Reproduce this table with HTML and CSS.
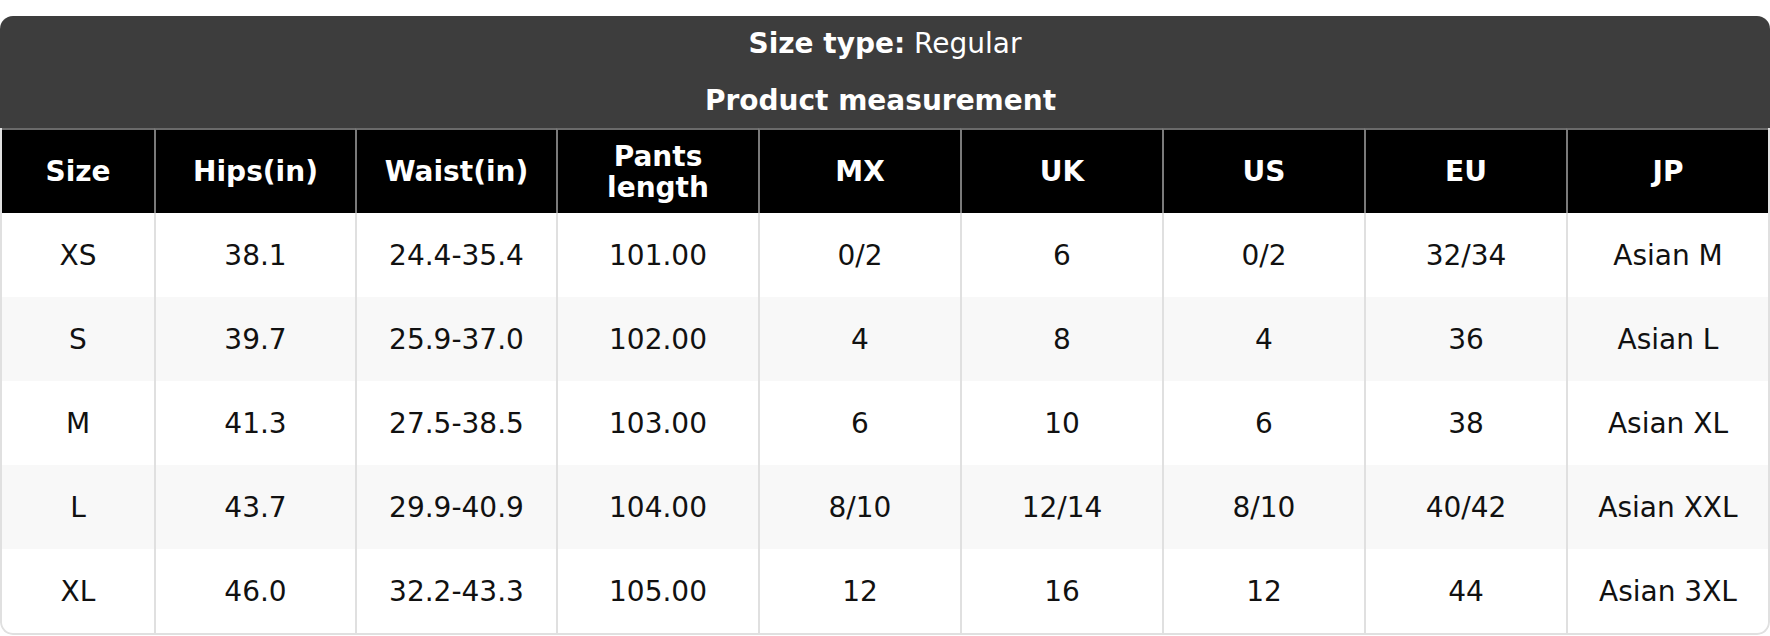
FILE: index.html
```html
<!DOCTYPE html>
<html>
<head>
<meta charset="utf-8">
<link rel="stylesheet" href="styles.css">
</head>
<body>
<div class="card">
  <div class="band">
    <div class="band-line"><b>Size type:</b> Regular</div>
    <div class="band-line band-sub"><b>Product measurement</b></div>
  </div>
  <div class="table-wrap">
    <table class="chart">
      <colgroup>
        <col class="col-first">
        <col class="col-narrow"><col class="col-narrow">
        <col><col><col><col><col><col>
      </colgroup>
      <thead>
        <tr>
          <th>Size</th><th>Hips(in)</th><th>Waist(in)</th><th>Pants<br>length</th><th>MX</th><th>UK</th><th>US</th><th>EU</th><th>JP</th>
        </tr>
      </thead>
      <tbody>
        <tr><td>XS</td><td>38.1</td><td>24.4-35.4</td><td>101.00</td><td>0/2</td><td>6</td><td>0/2</td><td>32/34</td><td>Asian M</td></tr>
        <tr><td>S</td><td>39.7</td><td>25.9-37.0</td><td>102.00</td><td>4</td><td>8</td><td>4</td><td>36</td><td>Asian L</td></tr>
        <tr><td>M</td><td>41.3</td><td>27.5-38.5</td><td>103.00</td><td>6</td><td>10</td><td>6</td><td>38</td><td>Asian XL</td></tr>
        <tr><td>L</td><td>43.7</td><td>29.9-40.9</td><td>104.00</td><td>8/10</td><td>12/14</td><td>8/10</td><td>40/42</td><td>Asian XXL</td></tr>
        <tr><td>XL</td><td>46.0</td><td>32.2-43.3</td><td>105.00</td><td>12</td><td>16</td><td>12</td><td>44</td><td>Asian 3XL</td></tr>
      </tbody>
    </table>
  </div>
</div>
</body>
</html>
```

FILE: styles.css
```css
html, body {
  margin: 0;
  padding: 0;
  background: #ffffff;
}

body {
  padding-top: 16px;
  font-family: "DejaVu Sans", "Liberation Sans", sans-serif;
  font-size: 28px;
  color: #111111;
}

.card {
  width: 1770px;
  border-radius: 13px;
  overflow: hidden;
  background: #ffffff;
}

.band {
  background: #3d3d3d;
  color: #ffffff;
}

.band-line {
  height: 56px;
  line-height: 56px;
  text-align: center;
  white-space: nowrap;
  overflow: hidden;
}

.band-sub {
  line-height: 58px;
  padding-right: 9px;
}

.band-line b {
  font-weight: bold;
}

.table-wrap {
  border: 2px solid #e0e0e0;
  border-top: none;
  border-radius: 0 0 13px 13px;
  overflow: hidden;
}

.chart {
  width: 100%;
  table-layout: fixed;
  border-collapse: separate;
  border-spacing: 0;
}

.col-first {
  width: 152px;
}

.col-narrow {
  width: 201px;
}

.chart th {
  background: #000000;
  color: #ffffff;
  font-weight: bold;
  height: 85px;
  padding: 0 4px;
  line-height: 31px;
  border-top: 2px solid #6a6a6a;
  border-left: 2px solid #7a7a7a;
  box-sizing: border-box;
  text-align: center;
  vertical-align: middle;
}

.chart th:first-child {
  border-left: none;
}

.chart td {
  height: 84px;
  padding: 2px 4px 0;
  line-height: 34px;
  text-align: center;
  vertical-align: middle;
  border-left: 2px solid #e0e0e0;
  box-sizing: border-box;
  white-space: nowrap;
}

.chart td:first-child {
  border-left: none;
}

.chart tbody tr:nth-child(even) td {
  background: #f8f8f8;
}
```
